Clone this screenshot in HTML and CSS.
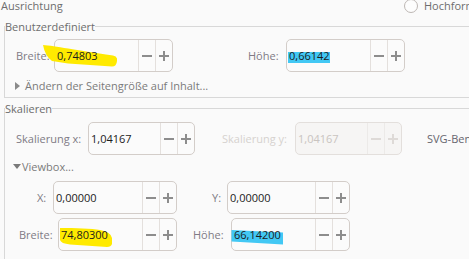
FILE: index.html
```html
<!DOCTYPE html>
<html lang="de">
<head>
<meta charset="utf-8">
<title>Dokumenteinstellungen</title>
<link rel="stylesheet" href="styles.css">
</head>
<body>
<div class="toprow">
  <div class="toprow-title">Ausrichtung</div>
  <label class="radio"><span class="radio-dot"></span><span>Hochformat</span></label>
</div>

<fieldset class="group group-custom">
  <legend>Benutzerdefiniert</legend>
  <div class="row row-size">
    <span class="lbl lbl-size">Breite:</span>
    <div class="spin spin-size">
      <svg class="mark mark-y1" width="74" height="22" viewBox="43 45 74 22"><path d="M43,45 C55,46 75,50 113,55.5 Q118,56.5 117,61 Q116.5,66.5 112,66.5 L68,63.5 L52,61 Q45,56 43,45 Z"/></svg>
      <div class="val"><span class="txt">0,74803</span></div>
      <div class="btn"><svg width="10" height="10" viewBox="0 0 10 10"><rect x="0" y="4" width="10" height="2"/></svg></div>
      <div class="btn"><svg width="10" height="10" viewBox="0 0 10 10"><rect x="0" y="4" width="10" height="2"/><rect x="4" y="0" width="2" height="10"/></svg></div>
    </div>
    <span class="lbl lbl-size gap-h1">Höhe:</span>
    <div class="spin spin-size">
      <div class="mark mark-b1"></div>
      <div class="val"><span class="txt">0,66142</span></div>
      <div class="btn"><svg width="10" height="10" viewBox="0 0 10 10"><rect x="0" y="4" width="10" height="2"/></svg></div>
      <div class="btn"><svg width="10" height="10" viewBox="0 0 10 10"><rect x="0" y="4" width="10" height="2"/><rect x="4" y="0" width="2" height="10"/></svg></div>
    </div>
  </div>
  <div class="expander expander-closed">
    <svg class="arrow" width="5" height="8" viewBox="0 0 5 8"><path d="M0,0 L5,4 L0,8 Z"/></svg>
    <span>Ändern der Seitengröße auf Inhalt...</span>
  </div>
</fieldset>

<fieldset class="group group-scale">
  <legend>Skalieren</legend>
  <div class="row row-scale">
    <span class="lbl lbl-scale">Skalierung x:</span>
    <div class="spin spin-scale">
      <div class="val"><span class="txt">1,04167</span></div>
      <div class="btn"><svg width="10" height="10" viewBox="0 0 10 10"><rect x="0" y="4" width="10" height="2"/></svg></div>
      <div class="btn"><svg width="10" height="10" viewBox="0 0 10 10"><rect x="0" y="4" width="10" height="2"/><rect x="4" y="0" width="2" height="10"/></svg></div>
    </div>
    <span class="lbl lbl-scale-y is-disabled">Skalierung y:</span>
    <div class="spin spin-scale is-disabled">
      <div class="val"><span class="txt">1,04167</span></div>
      <div class="btn"><svg width="10" height="10" viewBox="0 0 10 10"><rect x="0" y="4" width="10" height="2"/></svg></div>
      <div class="btn"><svg width="10" height="10" viewBox="0 0 10 10"><rect x="0" y="4" width="10" height="2"/><rect x="4" y="0" width="2" height="10"/></svg></div>
    </div>
    <span class="lbl lbl-units">SVG-Benutzereinheiten pro mm</span>
  </div>
  <div class="expander expander-open">
    <svg class="arrow" width="8" height="5" viewBox="0 0 8 5"><path d="M0,0 L8,0 L4,5 Z"/></svg>
    <span>Viewbox...</span>
  </div>
  <div class="row row-pos">
    <span class="lbl lbl-pos">X:</span>
    <div class="spin spin-x">
      <div class="val"><span class="txt">0,00000</span></div>
      <div class="btn"><svg width="10" height="10" viewBox="0 0 10 10"><rect x="0" y="4" width="10" height="2"/></svg></div>
      <div class="btn"><svg width="10" height="10" viewBox="0 0 10 10"><rect x="0" y="4" width="10" height="2"/><rect x="4" y="0" width="2" height="10"/></svg></div>
    </div>
    <span class="lbl lbl-pos gap-y">Y:</span>
    <div class="spin spin-y">
      <div class="val"><span class="txt">0,00000</span></div>
      <div class="btn"><svg width="10" height="10" viewBox="0 0 10 10"><rect x="0" y="4" width="10" height="2"/></svg></div>
      <div class="btn"><svg width="10" height="10" viewBox="0 0 10 10"><rect x="0" y="4" width="10" height="2"/><rect x="4" y="0" width="2" height="10"/></svg></div>
    </div>
  </div>
  <div class="row row-vb">
    <span class="lbl lbl-vbw">Breite:</span>
    <div class="spin spin-size">
      <svg class="mark mark-y2" width="54" height="21" viewBox="59 227 54 21"><path d="M60,228 C75,228 92,228.5 100,230 Q111,232 112,238 L112,244 Q111,247 107,247 L70,244.5 Q61,243.5 60,240 Z"/></svg>
      <div class="val"><span class="txt">74,80300</span></div>
      <div class="btn"><svg width="10" height="10" viewBox="0 0 10 10"><rect x="0" y="4" width="10" height="2"/></svg></div>
      <div class="btn"><svg width="10" height="10" viewBox="0 0 10 10"><rect x="0" y="4" width="10" height="2"/><rect x="4" y="0" width="2" height="10"/></svg></div>
    </div>
    <span class="lbl lbl-size gap-h2">Höhe:</span>
    <div class="spin spin-size">
      <svg class="mark mark-b2" width="53" height="17" viewBox="231 229 53 17"><path d="M231.5,230 L283,232.5 L283,244.5 L231.5,241.5 Z"/></svg>
      <div class="val"><span class="txt">66,14200</span></div>
      <div class="btn"><svg width="10" height="10" viewBox="0 0 10 10"><rect x="0" y="4" width="10" height="2"/></svg></div>
      <div class="btn"><svg width="10" height="10" viewBox="0 0 10 10"><rect x="0" y="4" width="10" height="2"/><rect x="4" y="0" width="2" height="10"/></svg></div>
    </div>
  </div>
</fieldset>
</body>
</html>
```

FILE: styles.css
```css
* { box-sizing: border-box; }

html, body {
  margin: 0;
  padding: 0;
}

body {
  width: 469px;
  height: 259px;
  overflow: hidden;
  background: #fafafa;
  font-family: "Open Sans", "Noto Sans", sans-serif;
  font-size: 11px;
  line-height: 15px;
  color: #807b85;
  white-space: nowrap;
}

/* top row */
.toprow {
  display: flex;
  align-items: center;
  height: 15px;
  margin-top: -2px;
  color: #6d6d6d;
}
.toprow-title {
  flex: 0 0 404px;
  padding-left: 1px;
}
.radio {
  display: flex;
  align-items: center;
}
.radio-dot {
  flex: none;
  width: 14px;
  height: 14px;
  margin-right: 6px;
  border: 1px solid #bdb7b4;
  border-radius: 50%;
  background: #fdfdfd;
}

/* frames */
.group {
  margin: 6px 0 0 4px;
  padding: 0;
  min-width: 0;
  border: 1px solid #d8d8d8;
  border-right: none;
}
.group legend {
  padding: 0;
  margin: 0;
  color: #6d6d6d;
  line-height: 15px;
}
.group-custom { padding-bottom: 4px; }
.group-scale { margin-top: 3px; padding-bottom: 30px; }

/* rows */
.row {
  display: flex;
  align-items: center;
  height: 33px;
}
.row-size { margin-top: 5px; padding-left: 11px; }
.row-scale { margin-top: 6px; padding-left: 11px; }
.row-pos { margin-top: 7px; padding-left: 32px; }
.row-vb { margin-top: 4px; padding-left: 14px; }

.lbl { flex: none; }
.lbl-size { width: 38px; }
.lbl-scale { width: 72px; }
.lbl-scale-y { width: 73px; margin-left: 27px; }
.lbl-units { margin-left: 25px; color: #66656e; }
.lbl-pos { width: 16px; }
.lbl-vbw { width: 39px; }
.lbl.is-disabled { color: #d6d2cf; }
.gap-h1 { margin-left: 75px; }
.gap-h2 { margin-left: 16px; }
.gap-y { margin-left: 35px; width: 15px; }

/* spin buttons */
.spin {
  position: relative;
  flex: none;
  display: flex;
  height: 33px;
  border: 1px solid #d3cdc9;
  border-radius: 5px;
  background: #fbfbfb;
}
.spin-size { width: 119px; }
.spin-scale { width: 107px; }
.spin-x { width: 124px; }
.spin-y { width: 123px; }

.spin .val {
  flex: 1;
  min-width: 0;
  display: flex;
  align-items: center;
  padding-left: 2px;
  color: #1c1c1c;
}
.spin .txt { position: relative; }
.spin .btn {
  flex: none;
  width: 17px;
  display: flex;
  align-items: center;
  justify-content: center;
  border-left: 1px solid #e4e0dd;
  fill: #8d8d8d;
}
.spin .btn svg { display: block; shape-rendering: crispEdges; }

.spin.is-disabled {
  border-color: #e3dfdc;
  background: #f6f5f4;
}
.spin.is-disabled .val { color: #c9c4c0; }
.spin.is-disabled .btn { border-left-color: #eceae8; fill: #dedad7; }

/* expanders */
.expander {
  display: flex;
  align-items: center;
  height: 15px;
  color: #7a7a7a;
}
.expander .arrow { display: block; flex: none; }
.expander-closed { margin-top: 6px; padding-left: 10px; }
.expander-closed .arrow { margin-right: 5px; fill: #8a8a8a; }
.expander-open { margin-top: 4px; padding-left: 8px; }
.expander-open .arrow { margin-right: 1px; fill: #7a7a7a; }

/* marker highlights drawn over the screenshot */
.mark { position: absolute; display: block; }
.mark-y1 { left: -12px; top: 5px; fill: #ffea00; }
.mark-y2 { left: 0; top: 8px; fill: #ffea00; }
.mark-b2 { left: -1px; top: 10px; fill: #42c8f4; }
.mark-b1 {
  left: 1px;
  top: 12px;
  width: 42px;
  height: 11px;
  background: #42c8f4;
}
```
